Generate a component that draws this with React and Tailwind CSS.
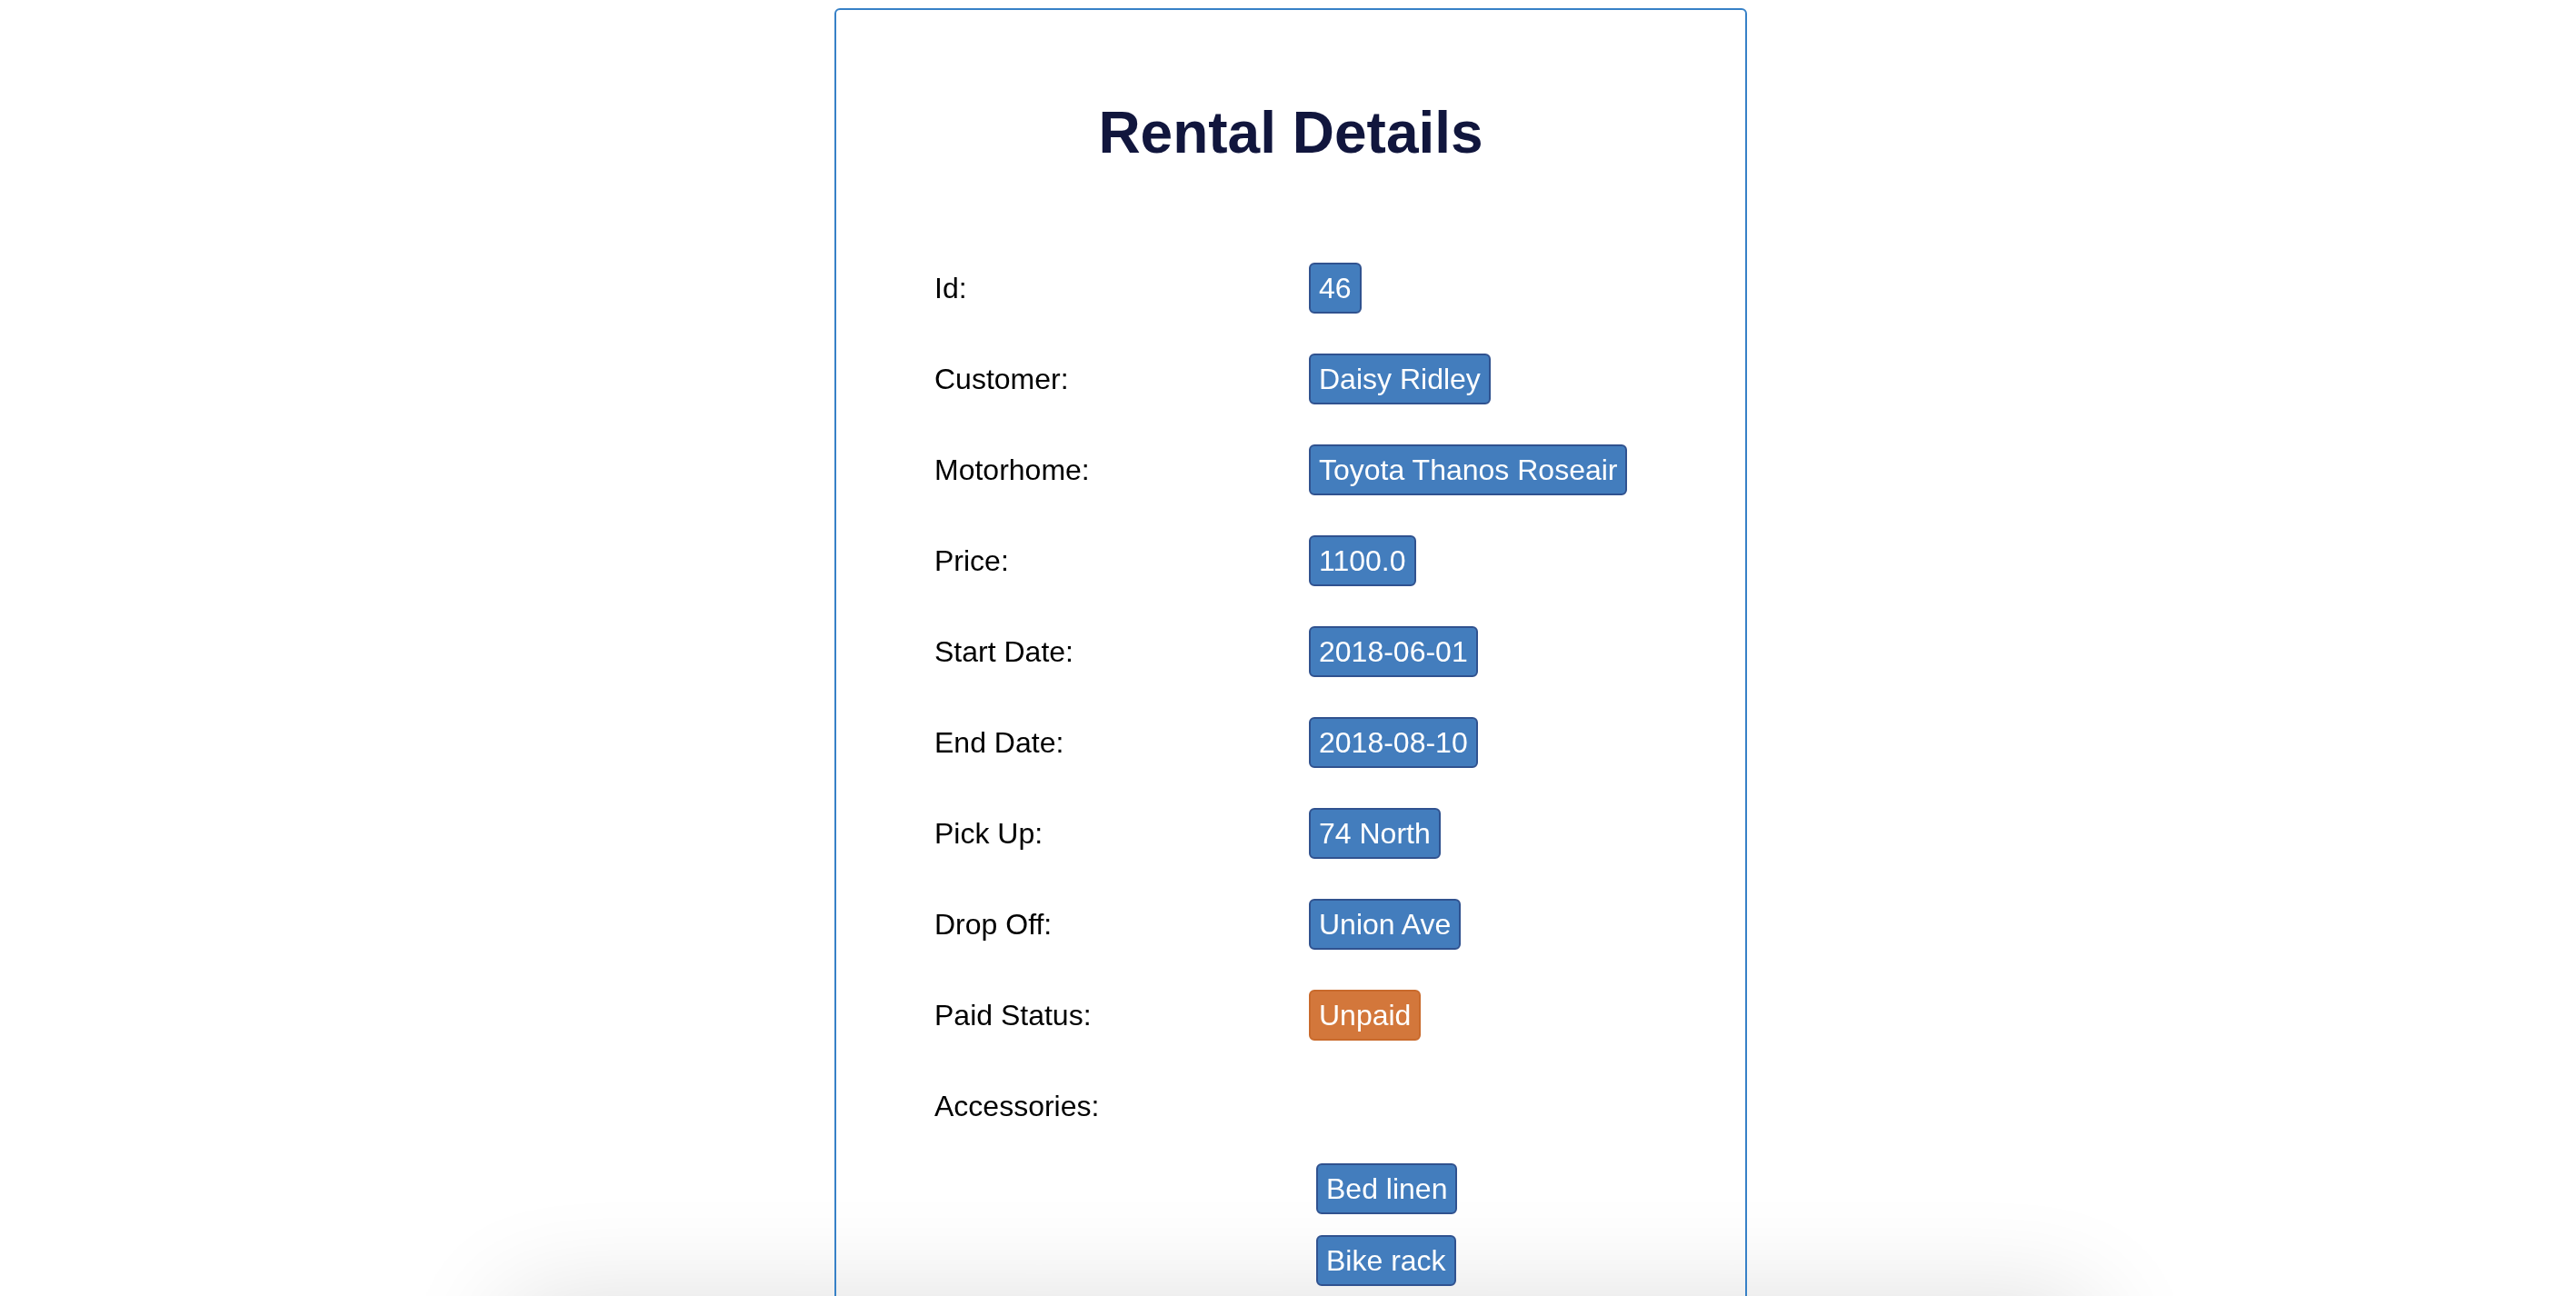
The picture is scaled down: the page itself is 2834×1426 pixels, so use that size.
import React from 'react';

const rental = {
    id: 46,
    customer: 'Daisy Ridley',
    motorhome: 'Toyota Thanos Roseair',
    price: '1100.0',
    startDate: '2018-06-01',
    endDate: '2018-08-10',
    pickUp: '74 North',
    dropOff: 'Union Ave',
    paid: false,
    accessories: ['Bed linen', 'Bike rack'],
};

const Badge = ({ children, warning }) => (
    <span
        className={`inline-block rounded-[6px] border-2 px-[9px] py-2 leading-[36px] text-white ${warning ? 'bg-[#d3773b] border-[#c96a2c]' : 'bg-[#437dbd] border-[#30528f]'}`}
    >
        {children}
    </span>
);

const Row = ({ label, children }) => (
    <div className="flex h-[100px] items-center">
        <div className="w-[412px]">{label}</div>
        <div>{children}</div>
    </div>
);

const App = () => {
    const rows = [
        ['Id:', rental.id],
        ['Customer:', rental.customer],
        ['Motorhome:', rental.motorhome],
        ['Price:', rental.price],
        ['Start Date:', rental.startDate],
        ['End Date:', rental.endDate],
        ['Pick Up:', rental.pickUp],
        ['Drop Off:', rental.dropOff],
    ];

    return (
        <div className="min-h-screen font-['Liberation_Sans',Arial,sans-serif] text-[32px] text-black">
            <div className="pointer-events-none fixed left-[560px] top-[1432px] -z-10 h-[200px] w-[1740px] shadow-[0_0_120px_rgba(0,0,0,0.14)]"></div>

            <div className="flex justify-center pl-[6px]">
                <div className="mt-[9px] min-h-[1600px] w-[1004px] rounded-[6px] border-2 border-[#3781c7]">
                    <h1 className="pt-[98px] text-center text-[64px] font-bold leading-[74px] text-[#11163d]">
                        Rental Details
                    </h1>

                    <div className="mt-[84px] pl-[108px]">
                        {rows.map(([label, value]) => (
                            <Row key={label} label={label}>
                                <Badge>{value}</Badge>
                            </Row>
                        ))}
                        <Row label="Paid Status:">
                            <Badge warning={!rental.paid}>{rental.paid ? 'Paid' : 'Unpaid'}</Badge>
                        </Row>
                        <Row label="Accessories:" />

                        <div className="ml-[420px] mt-[13px] flex flex-col items-start gap-[23px]">
                            {rental.accessories.map((item) => (
                                <Badge key={item}>{item}</Badge>
                            ))}
                        </div>
                    </div>
                </div>
            </div>
        </div>
    );
};

export default App;
